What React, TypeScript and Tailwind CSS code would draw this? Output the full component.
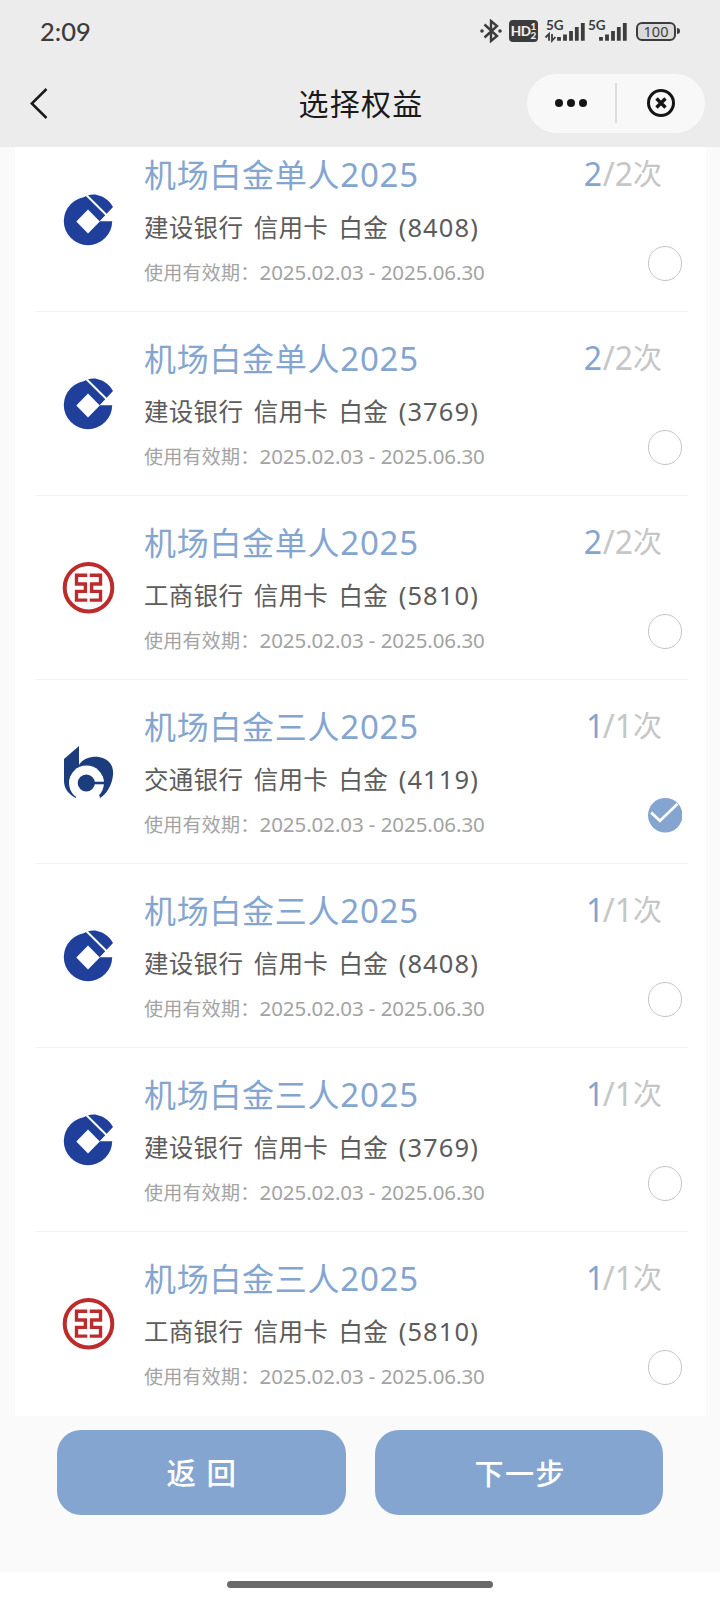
import React from "react";

type Bank = "ccb" | "icbc" | "bocom";

interface Benefit {
  bank: Bank;
  title: string;
  card: string;
  tail: string;
  count: number;
  selected?: boolean;
}

const benefits: Benefit[] = [
  { bank: "ccb", title: "机场白金单人", card: "建设银行", tail: "8408", count: 2 },
  { bank: "ccb", title: "机场白金单人", card: "建设银行", tail: "3769", count: 2 },
  { bank: "icbc", title: "机场白金单人", card: "工商银行", tail: "5810", count: 2 },
  { bank: "bocom", title: "机场白金三人", card: "交通银行", tail: "4119", count: 1, selected: true },
  { bank: "ccb", title: "机场白金三人", card: "建设银行", tail: "8408", count: 1 },
  { bank: "ccb", title: "机场白金三人", card: "建设银行", tail: "3769", count: 1 },
  { bank: "icbc", title: "机场白金三人", card: "工商银行", tail: "5810", count: 1 },
];

function BankLogo({ bank }: { bank: Bank }) {
  if (bank === "ccb") {
    return (
      <svg className="size-14" viewBox="0 0 56 56" fill="none">
        <circle cx="28" cy="30" r="24.2" fill="#1f3f9a" />
        <path d="M39 30.3L54 13V30.3Z" fill="#fff" />
        <path d="M24 6.2C27 3.8 33 3 37 4C44 5.5 49.5 9.5 53 16L46 23.5L39.5 30.3L28 18Z" fill="#1f3f9a" />
        <path d="M26.5 4.2L49 26.5" stroke="#fff" strokeWidth="2" />
        <path d="M28 18.5L39.8 30.5L28 42.5L16.3 30.5Z" fill="#fff" />
      </svg>
    );
  }
  if (bank === "icbc") {
    return (
      <svg className="size-14" viewBox="0 0 56 56" fill="none" stroke="#bd2c2c">
        <circle cx="28.5" cy="28.7" r="23.8" strokeWidth="4" />
        <path
          d="M27.3 16.3H16.5V25H25.4V32.4H16.5V41.1H27.3M29.7 16.3H40.5V25H31.6V32.4H40.5V41.1H29.7"
          strokeWidth="3.4"
        />
      </svg>
    );
  }
  return (
    <svg className="size-14" viewBox="0 0 56 56" fill="none">
      <path d="M4 16L19 3V40L16 55C8 51 4 45 4 38Z" fill="#1b3c7d" />
      <path d="M18.5 23C22 15.5 31 13 39 14C49 15.5 54 23 53 32C52 42 47 50.5 40 55L36 40Z" fill="#1b3c7d" />
      <circle cx="26.5" cy="40" r="17.5" fill="#fff" />
      <circle cx="26.3" cy="40" r="8.6" fill="#1b3c7d" />
      <path d="M27 40H46" stroke="#1b3c7d" strokeWidth="2.6" />
    </svg>
  );
}

function Radio({ selected }: { selected?: boolean }) {
  if (!selected) {
    return <span className="size-[34.5px] rounded-full border-[1.5px] border-[#c6c6c6]" />;
  }
  return (
    <svg className="size-[34.5px]" viewBox="0 0 35 35" fill="none">
      <circle cx="17.5" cy="17.5" r="17.5" fill="#84a5cf" />
      <path d="M3.2 14.8L12 23.2L29.8 6" stroke="#fff" strokeWidth="2.8" />
    </svg>
  );
}

function BenefitRow({ item }: { item: Benefit }) {
  return (
    <li className="mr-[18px] ml-5 flex h-[184px] shrink-0 border-b-[1.5px] border-[#f3f3f3] last:border-transparent">
      <div className="w-[109px] pt-[63px] pl-[25px]">
        <BankLogo bank={item.bank} />
      </div>
      <div className="flex flex-1 flex-col pt-[25px] whitespace-nowrap">
        <h2 className="h-11 text-[32px] leading-[44px] tracking-[0.7px] text-[#84a5cf]">
          {item.title}
          <span className="text-[33px] tracking-[0.8px]">2025</span>
        </h2>
        <p className="mt-2.5 h-10 text-[24.5px] leading-10 tracking-[0.3px] text-[#5c5c5c] [word-spacing:3.8px]">
          {item.card} 信用卡 白金 <span className="text-[25.5px] tracking-[1.1px]">({item.tail})</span>
        </p>
        <p className="mt-[11px] h-7 text-[19px] leading-7 tracking-[0.25px] text-[#a3a3a3]">
          使用有效期：<span className="text-[20.5px] tracking-[-0.07px]">2025.02.03 - 2025.06.30</span>
        </p>
      </div>
      <div className="flex flex-col items-end pt-6 pr-1.5">
        <div className="mr-5 flex h-11 text-[32px] leading-[44px] text-[#c6c6c6]">
          <span className={item.count === 1 ? "tracking-[-1.5px] text-[#84a5cf]" : "tracking-[0.8px] text-[#84a5cf]"}>
            {item.count}
          </span>
          <span>/{item.count}</span>
          <span className="text-[29px]">次</span>
        </div>
        <div className="mt-[50px] flex">
          <Radio selected={item.selected} />
        </div>
      </div>
    </li>
  );
}

function Signal({ arrows }: { arrows?: boolean }) {
  return (
    <svg className="h-10 w-10 overflow-visible" viewBox="0 -8 40 40">
      <text x="-1" y="11" fontSize="13.5" fontWeight="700" fontFamily="Lato, sans-serif" fill="#3c3c3c">
        5G
      </text>
      <path d="M12 21.7V18M18 21.7V15.5M24 21.7V12M29.8 21.7V8M35.8 21.7V4" stroke="#3c3c3c" strokeWidth="3.8" />
      {arrows && (
        <path d="M-1.5 18.5L2 15V21.7M5 15V21.7L8.5 18" stroke="#3c3c3c" strokeWidth="1.8" fill="none" />
      )}
    </svg>
  );
}

function StatusBar() {
  return (
    <div className="flex h-[62px] items-center justify-between px-10 text-[#3c3c3c]">
      <span className="font-['Lato'] text-[25.5px] font-medium">2:09</span>
      <div className="flex items-center">
        <svg className="h-6 w-[22px]" viewBox="0 0 22 24" fill="none" stroke="#3c3c3c" strokeWidth="2.4">
          <path d="M4.5 5.5L17 17L11 22V2L17 7L4.5 18.5" />
          <circle cx="2" cy="12" r="1.8" fill="#3c3c3c" stroke="none" />
          <circle cx="20" cy="12" r="1.8" fill="#3c3c3c" stroke="none" />
        </svg>
        <div className="ml-[7px] flex h-[22px] w-[29px] items-center justify-center rounded bg-[#3c3c3c] font-['Lato'] font-black text-[#ececec]">
          <span className="text-[13.5px] leading-5 tracking-[-0.5px]">HD</span>
          <span className="flex flex-col text-[10px] leading-[9.5px]">
            <span>1</span>
            <span>2</span>
          </span>
        </div>
        <div className="ml-[9px] flex gap-[2px]">
          <Signal arrows />
          <Signal />
        </div>
        <div className="ml-[7px] flex h-[19px] w-10 items-center justify-center rounded-[6px] border-2 border-[#3c3c3c] bg-[#dadada] font-['Noto_Sans'] text-[14.5px] leading-none">
          100
        </div>
        <span className="ml-px h-[6px] w-[3px] rounded-r bg-[#3c3c3c]" />
      </div>
    </div>
  );
}

function NavBar() {
  return (
    <div className="flex h-[85px] items-center justify-between pr-[15px] pl-[30px]">
      <svg className="-mt-[2px] h-[31px] w-[165px]" viewBox="0 0 165 31" fill="none" stroke="#1a1a1a" strokeWidth="2.5">
        <path d="M16.5 1L1.8 15.5L16.5 30" />
      </svg>
      <h1 className="-mt-[2px] text-[30px] leading-10 tracking-[1.3px] text-[#1a1a1a]">选择权益</h1>
      <div className="-mt-[3px] flex h-[59px] w-[178px] items-center rounded-full bg-[#f8f8f8]">
        <div className="flex flex-1 justify-center gap-1">
          <span className="size-2 rounded-full bg-[#151515]" />
          <span className="size-2 rounded-full bg-[#151515]" />
          <span className="size-2 rounded-full bg-[#151515]" />
        </div>
        <span className="h-10 w-[2px] bg-[#dcdcdc]" />
        <div className="flex flex-1 justify-center">
          <svg className="size-[30px]" viewBox="0 0 30 30" fill="none" stroke="#151515">
            <circle cx="15" cy="15" r="12.5" strokeWidth="3" />
            <path d="M10.5 10.5L19.5 19.5M19.5 10.5L10.5 19.5" strokeWidth="3.4" />
          </svg>
        </div>
      </div>
    </div>
  );
}

export default function App() {
  return (
    <div className="flex h-[1600px] w-[720px] flex-col overflow-hidden bg-[#fafafa] font-['Noto_Sans','Noto_Sans_CJK_SC',sans-serif]">
      <header className="h-[147px] shrink-0 bg-[#ececec]">
        <StatusBar />
        <NavBar />
      </header>
      <ul className="mr-3.5 ml-[15px] flex h-[1269px] shrink-0 flex-col justify-end overflow-hidden bg-white">
        {benefits.map((item, i) => (
          <BenefitRow key={i} item={item} />
        ))}
      </ul>
      <div className="flex h-[156px] shrink-0 justify-center gap-[29px] pt-[13.5px]">
        <button className="h-[85px] w-[288.5px] rounded-[24px] bg-[#84a5cf] pt-[3px] text-[29.5px] font-medium text-white [word-spacing:3px]">
          返 回
        </button>
        <button className="h-[85px] w-[288.5px] rounded-[24px] bg-[#84a5cf] pt-[3px] pl-[3px] text-[29px] font-medium tracking-[1.5px] text-white">
          下一步
        </button>
      </div>
      <div className="flex flex-1 justify-center bg-white pt-[9px]">
        <span className="h-[7px] w-[266px] rounded-full bg-[#6a6a6a]" />
      </div>
    </div>
  );
}
